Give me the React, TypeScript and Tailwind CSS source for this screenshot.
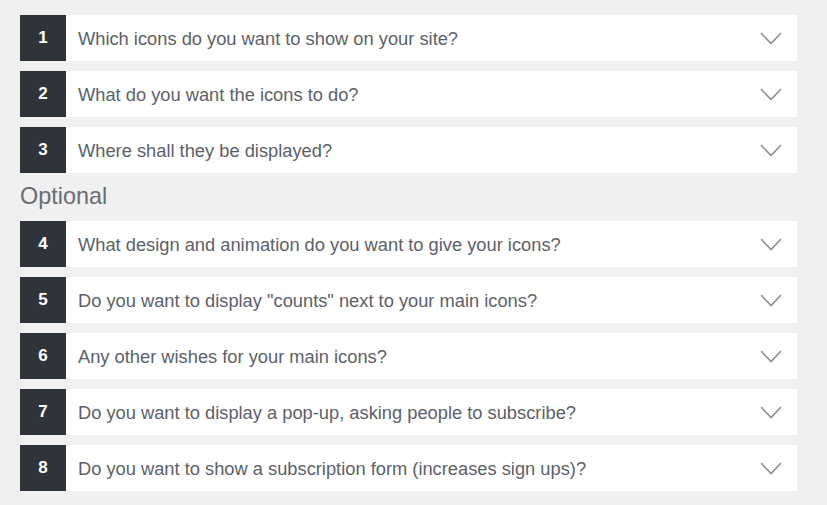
const MAIN = [
  "Which icons do you want to show on your site?",
  "What do you want the icons to do?",
  "Where shall they be displayed?",
];

const OPTIONAL = [
  "What design and animation do you want to give your icons?",
  'Do you want to display "counts" next to your main icons?',
  "Any other wishes for your main icons?",
  "Do you want to display a pop-up, asking people to subscribe?",
  "Do you want to show a subscription form (increases sign ups)?",
];

function Chevron() {
  return (
    <svg width="22" height="13" viewBox="0 0 22 13" fill="none" className="shrink-0">
      <path d="M1 1 L11 11.5 L21 1" stroke="#8b9096" strokeWidth="1.6" />
    </svg>
  );
}

function Step({ n, text }: { n: number; text: string }) {
  return (
    <div className="flex h-[46px] items-center bg-white">
      <div className="flex h-full w-[46px] shrink-0 items-center justify-center bg-[#2f343b] text-[17px] font-bold text-white">
        {n}
      </div>
      <div className="flex-1 pl-3 pt-px text-[18.3px] text-[#5d6169]">{text}</div>
      <div className="pr-[15px]">
        <Chevron />
      </div>
    </div>
  );
}

export default function App() {
  return (
    <div
      className="min-h-[505px] bg-[#f0f0f0] px-5 pt-[15px]"
      style={{ fontFamily: '"Liberation Sans", Arial, sans-serif' }}
    >
      <div className="w-[777px]">
        <div className="flex flex-col gap-[10px]">
          {MAIN.map((t, i) => (
            <Step key={i} n={i + 1} text={t} />
          ))}
        </div>
        <div className="flex h-[48px] items-center text-[23.4px] text-[#686c73]">Optional</div>
        <div className="flex flex-col gap-[10px]">
          {OPTIONAL.map((t, i) => (
            <Step key={i} n={i + 4} text={t} />
          ))}
        </div>
      </div>
    </div>
  );
}
